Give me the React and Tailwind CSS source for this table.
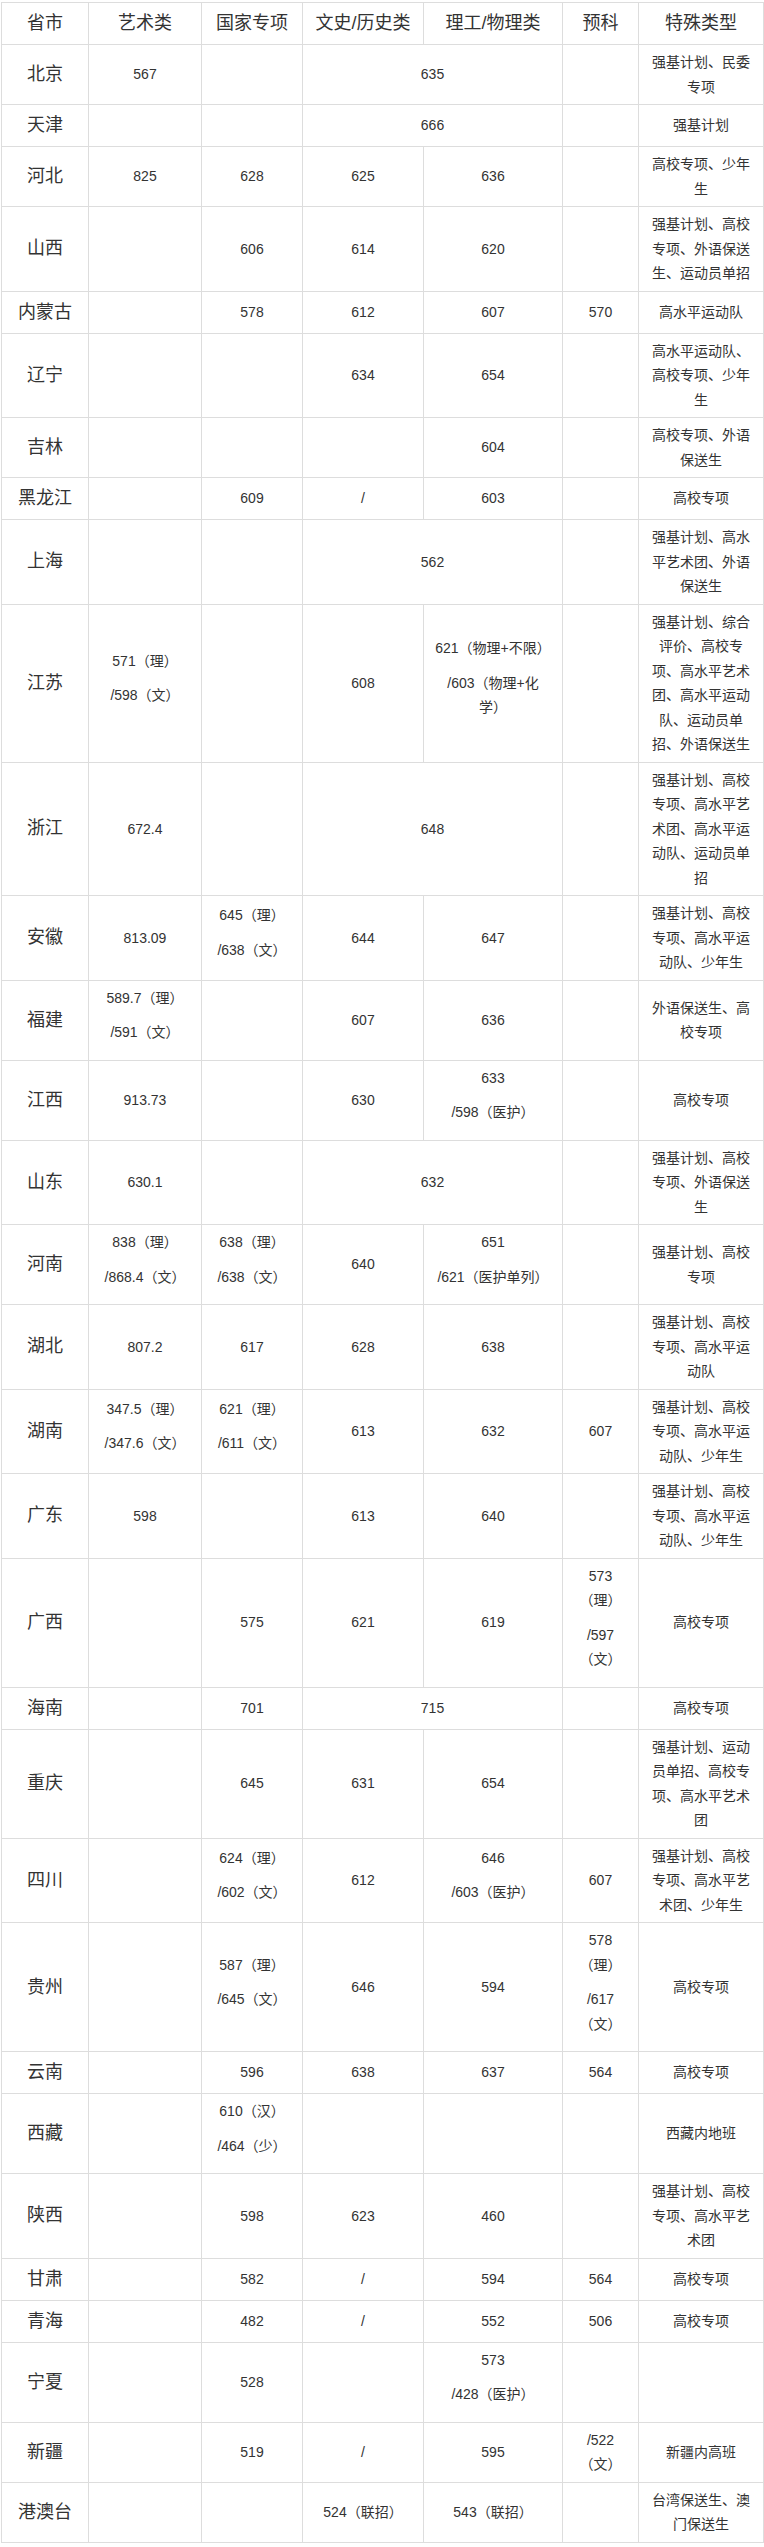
const head = ['省市', '艺术类', '国家专项', '文史/历史类', '理工/物理类', '预科', '特殊类型'];
const widths = ['w-[87px]', 'w-[113px]', 'w-[101px]', 'w-[121px]', 'w-[139px]', 'w-[76px]', 'w-[125px]'];

const rows = [
	['北京', '567', '', { span: 2, v: '635' }, '', '强基计划、民委专项'],
	['天津', '', '', { span: 2, v: '666' }, '', '强基计划'],
	['河北', '825', '628', '625', '636', '', '高校专项、少年生'],
	['山西', '', '606', '614', '620', '', '强基计划、高校专项、外语保送生、运动员单招'],
	['内蒙古', '', '578', '612', '607', '570', '高水平运动队'],
	['辽宁', '', '', '634', '654', '', '高水平运动队、高校专项、少年生'],
	['吉林', '', '', '', '604', '', '高校专项、外语保送生'],
	['黑龙江', '', '609', '/', '603', '', '高校专项'],
	['上海', '', '', { span: 2, v: '562' }, '', '强基计划、高水平艺术团、外语保送生'],
	['江苏', ['571（理）', '/598（文）'], '', '608', ['621（物理+不限）', '/603（物理+化\n学）'], '', '强基计划、综合评价、高校专项、高水平艺术团、高水平运动队、运动员单招、外语保送生'],
	['浙江', '672.4', '', { span: 2, v: '648' }, '', '强基计划、高校专项、高水平艺术团、高水平运动队、运动员单招'],
	['安徽', '813.09', ['645（理）', '/638（文）'], '644', '647', '', '强基计划、高校专项、高水平运动队、少年生'],
	['福建', ['589.7（理）', '/591（文）'], '', '607', '636', '', '外语保送生、高校专项'],
	['江西', '913.73', '', '630', ['633', '/598（医护）'], '', '高校专项'],
	['山东', '630.1', '', { span: 2, v: '632' }, '', '强基计划、高校专项、外语保送生'],
	['河南', ['838（理）', '/868.4（文）'], ['638（理）', '/638（文）'], '640', ['651', '/621（医护单列）'], '', '强基计划、高校专项'],
	['湖北', '807.2', '617', '628', '638', '', '强基计划、高校专项、高水平运动队'],
	['湖南', ['347.5（理）', '/347.6（文）'], ['621（理）', '/611（文）'], '613', '632', '607', '强基计划、高校专项、高水平运动队、少年生'],
	['广东', '598', '', '613', '640', '', '强基计划、高校专项、高水平运动队、少年生'],
	['广西', '', '575', '621', '619', ['573（理）', '/597（文）'], '高校专项'],
	['海南', '', '701', { span: 2, v: '715' }, '', '高校专项'],
	['重庆', '', '645', '631', '654', '', '强基计划、运动员单招、高校专项、高水平艺术团'],
	['四川', '', ['624（理）', '/602（文）'], '612', ['646', '/603（医护）'], '607', '强基计划、高校专项、高水平艺术团、少年生'],
	['贵州', '', ['587（理）', '/645（文）'], '646', '594', ['578（理）', '/617（文）'], '高校专项'],
	['云南', '', '596', '638', '637', '564', '高校专项'],
	['西藏', '', ['610（汉）', '/464（少）'], '', '', '', '西藏内地班'],
	['陕西', '', '598', '623', '460', '', '强基计划、高校专项、高水平艺术团'],
	['甘肃', '', '582', '/', '594', '564', '高校专项'],
	['青海', '', '482', '/', '552', '506', '高校专项'],
	['宁夏', '', '528', '', ['573', '/428（医护）'], '', ''],
	['新疆', '', '519', '/', '595', '/522（文）', '新疆内高班'],
	['港澳台', '', '', '524（联招）', '543（联招）', '', '台湾保送生、澳门保送生'],
];

const cellBase = 'border border-[#dddddd] px-[10px] py-[5px] text-center align-middle';

const Value = ({ v }) => {
	if (Array.isArray(v)) {
		return v.map((line, i) => (
			<p key={i} className="mb-[10px] whitespace-pre-line">
				{line}
			</p>
		));
	}
	return v;
};

export default function App() {
	return (
		<div
			className="bg-white pt-[2px] pl-px text-[#333333]"
			style={{ fontFamily: '"Liberation Sans", "Noto Sans CJK SC", sans-serif' }}
		>
			<table className="w-[762px] table-fixed border-collapse">
				<colgroup>
					{widths.map((w, i) => (
						<col key={i} className={w} />
					))}
				</colgroup>
				<thead>
					<tr>
						{head.map(h => (
							<th key={h} className={`${cellBase} text-[18px] leading-[31px] font-normal`}>
								{h}
							</th>
						))}
					</tr>
				</thead>
				<tbody>
					{rows.map(([name, ...cells]) => (
						<tr key={name}>
							<td className={`${cellBase} text-[18px] leading-[31px]`}>{name}</td>
							{cells.map((c, i) => {
								const span = c && c.span ? c.span : 1;
								const v = c && c.span ? c.v : c;
								return (
									<td key={i} colSpan={span} className={`${cellBase} text-[14px] leading-[24.5px]`}>
										<Value v={v} />
									</td>
								);
							})}
						</tr>
					))}
				</tbody>
			</table>
		</div>
	);
}
